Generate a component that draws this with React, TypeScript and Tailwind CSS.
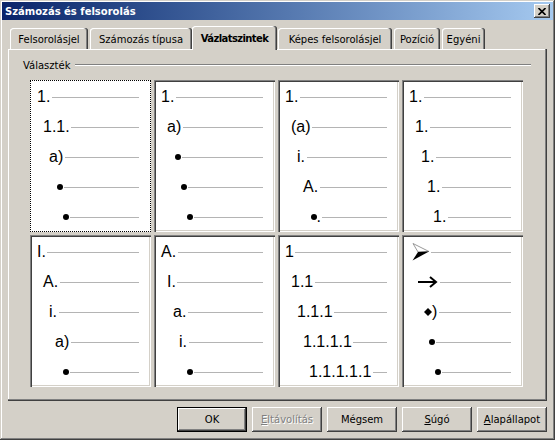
import React from "react";

// Each cell lists five levels. Special markers: "•" bullet, "•." bullet + period,
// "➤" 3D arrowhead, "→" arrow, "◆)" diamond + paren.
const CELLS: string[][] = [
  ["1.", "1.1.", "a)", "•", "•"],
  ["1.", "a)", "•", "•", "•"],
  ["1.", "(a)", "i.", "A.", "•."],
  ["1.", "1.", "1.", "1.", "1."],
  ["I.", "A.", "i.", "a)", "•"],
  ["A.", "I.", "a.", "i.", "•"],
  ["1", "1.1", "1.1.1", "1.1.1.1", "1.1.1.1.1"],
  ["➤", "→", "◆)", "•", "•"],
];

const INDENT = ["pl-[7px]", "pl-[13px]", "pl-[19px]", "pl-[25px]", "pl-[31px]"];

const TABS = [
  { label: "Felsorolásjel", cls: "ml-[2px] w-[78px]" },
  { label: "Számozás típusa", cls: "ml-[2px] w-[102px]" },
  { label: "Vázlatszintek", cls: "w-[85px]", active: true },
  { label: "Képes felsorolásjel", cls: "ml-[1px] w-[114px]" },
  { label: "Pozíció", cls: "ml-[2px] w-[46px]" },
  { label: "Egyéni", cls: "ml-[2px] w-[43px]" },
];

const raised =
  "shadow-[inset_-1px_-1px_0_#404040,inset_1px_1px_0_#ffffff,inset_-2px_-2px_0_#808080]";
const sunken =
  "shadow-[inset_1px_1px_0_#808080,inset_2px_2px_0_#404040,inset_-1px_-1px_0_#ffffff,inset_-2px_-2px_0_#d4d0c8]";

function Bullet() {
  return <span className="ml-[1.5px] h-[6px] w-[6px] shrink-0 rounded-full bg-black" />;
}

function Label({ item }: { item: string }) {
  if (item === "•") return <Bullet />;
  if (item === "•.")
    return (
      <>
        <Bullet />
        <span className="leading-none">.</span>
      </>
    );
  if (item === "➤")
    return (
      <svg width="18" height="18" viewBox="0 0 18 18" className="ml-[2.5px] shrink-0">
        <polygon points="1,0.5 17,8.5 6,9" fill="#ffffff" stroke="#808080" strokeWidth="0.8" />
        <polygon points="6,9 17,8.5 0.5,17.5" fill="#000000" />
      </svg>
    );
  if (item === "→")
    return (
      <svg width="21" height="12" viewBox="0 0 21 12" className="ml-[2px] shrink-0">
        <path d="M1 6 H19 M13 1 L19 6 L13 11" fill="none" stroke="#000" strokeWidth="2" />
      </svg>
    );
  if (item === "◆)")
    return (
      <>
        <svg width="8" height="8" viewBox="0 0 8 8" className="ml-[3px] shrink-0">
          <polygon points="4,0 8,4 4,8 0,4" fill="#000" />
        </svg>
        <span className="leading-none">)</span>
      </>
    );
  return <span className="leading-none">{item}</span>;
}

function Cell({ items, selected }: { items: string[]; selected?: boolean }) {
  return (
    <div
      className={
        "h-[152px] bg-white pt-[2px] " +
        (selected ? "outline-1 outline-dotted outline-black -outline-offset-1" : sunken)
      }
    >
      {items.map((item, i) => (
        <div key={i} className={"flex h-[30px] items-center pr-[12px] " + INDENT[i]}>
          <Label item={item} />
          <span className="ml-[1.5px] h-px flex-1 bg-[#b4b4b4]" />
        </div>
      ))}
    </div>
  );
}

function Button({ children, isDefault, disabled }: { children: React.ReactNode; isDefault?: boolean; disabled?: boolean }) {
  return (
    <div
      className={
        "flex h-[25px] w-[70px] items-center justify-center bg-[#d4d0c8] " +
        (isDefault
          ? "shadow-[inset_0_0_0_1px_#000000,inset_-2px_-2px_0_#404040,inset_2px_2px_0_#ffffff,inset_-3px_-3px_0_#808080]"
          : raised) +
        (disabled ? " text-[#808080] [text-shadow:1px_1px_0_#ffffff]" : " text-black")
      }
    >
      {children}
    </div>
  );
}

export default function App() {
  return (
    <div className="flex h-[440px] w-[555px] flex-col bg-[#d4d0c8] px-[2px] pt-[2px] font-['DejaVu_Sans',sans-serif] text-[10px] text-black shadow-[inset_-1px_-1px_0_#404040,inset_1px_1px_0_#d4d0c8,inset_-2px_-2px_0_#808080,inset_2px_2px_0_#ffffff]">
      {/* title bar */}
      <div className="flex h-[18px] items-center bg-linear-to-r from-[#0a246a] to-[#a6caf0] pl-[3px] pr-[3px]">
        <span className="flex-1 font-bold text-white">Számozás és felsorolás</span>
        <div className={"flex h-[14px] w-[16px] items-center justify-center bg-[#d4d0c8] " + raised}>
          <svg width="8" height="7" viewBox="0 0 8 7">
            <path d="M0.5 0 L7.5 7 M7.5 0 L0.5 7" stroke="#000" strokeWidth="1.6" />
          </svg>
        </div>
      </div>

      {/* tabs */}
      <div className="mt-[6px] flex h-[23px] items-end pl-[6px]">
        {TABS.map((t) =>
          t.active ? (
            <div
              key={t.label}
              className={
                "relative z-10 -mb-px flex h-[24px] items-center justify-center rounded-t-[3px] bg-[#d4d0c8] pt-[1px] font-bold shadow-[inset_-1px_0_0_#404040,inset_-2px_0_0_#808080,inset_1px_1px_0_#ffffff] " +
                t.cls
              }
            >
              <span className="tracking-[-0.6px]">{t.label}</span>
            </div>
          ) : (
            <div
              key={t.label}
              className={
                "flex h-[21px] items-center justify-center rounded-t-[3px] pt-[2px] shadow-[inset_-1px_0_0_#404040,inset_-2px_0_0_#808080,inset_1px_1px_0_#ffffff] " +
                t.cls
              }
            >
              {t.label}
            </div>
          )
        )}
      </div>

      {/* panel */}
      <div className="mx-[6px] h-[352px] shadow-[inset_-1px_-1px_0_#404040,inset_-2px_-2px_0_#808080,inset_1px_1px_0_#ffffff]">
        <div className="mt-[9px] flex h-[14px] items-center pl-[15px] pr-[16px]">
          <span>Választék</span>
          <span className="ml-[5px] h-[2px] flex-1 border-t border-b border-t-[#808080] border-b-white" />
        </div>
        <div className="ml-[22px] mt-[8px] grid grid-cols-[repeat(4,121px)] gap-[3px] font-['Liberation_Sans',Arial,sans-serif] text-[16px]">
          {CELLS.map((items, i) => (
            <Cell key={i} items={items} selected={i === 0} />
          ))}
        </div>
      </div>

      {/* buttons */}
      <div className="mr-[6px] mt-[6px] flex justify-end gap-[5px]">
        <Button isDefault>OK</Button>
        <Button disabled>
          <span>
            <u>E</u>ltávolítás
          </span>
        </Button>
        <Button>Mégsem</Button>
        <Button>
          <span>
            <u>S</u>úgó
          </span>
        </Button>
        <Button>
          <span>
            <u>A</u>lapállapot
          </span>
        </Button>
      </div>
    </div>
  );
}
